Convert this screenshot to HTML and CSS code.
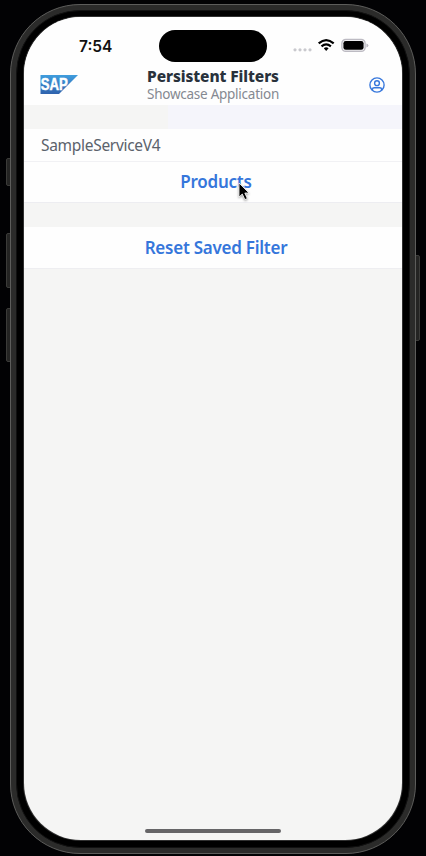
FILE: index.html
```html
<!DOCTYPE html>
<html lang="en">
<head>
<meta charset="utf-8">
<title>Persistent Filters</title>
<link rel="stylesheet" href="styles.css">
</head>
<body>
<div class="stage">
  <i class="key key-action"></i>
  <i class="key key-up"></i>
  <i class="key key-down"></i>
  <i class="key key-power"></i>
  <div class="phone">
    <div class="bezel">
      <main class="screen">
        <div class="status">
          <span class="time">7:54</span>
          <span class="island"></span>
          <svg class="indicators" width="78" height="16" viewBox="0 0 78 16">
            <g fill="#c9c9ce"><circle cx="3" cy="11.8" r="1.6"/><circle cx="8" cy="11.8" r="1.6"/><circle cx="13" cy="11.8" r="1.6"/><circle cx="18" cy="11.8" r="1.6"/></g>
            <g fill="none" stroke="#000" stroke-width="2.2"><path d="M26.7 5.4Q34.2-1 41.7 5.4"/><path d="M29.5 8.4Q34.2 4.4 38.9 8.4"/></g>
            <path d="M31.8 10.3Q34.2 8.4 36.6 10.3L34.2 13Z"/>
            <rect x="49.9" y="1.5" width="23.2" height="11.8" rx="3.8" fill="#fff" stroke="#bdbbc3" stroke-width="1.4"/>
            <rect x="51.4" y="3" width="20.2" height="8.8" rx="2.3"/>
            <path d="M74.4 5.4Q76.4 6 76.4 7.4T74.4 9.4Z" fill="#bdbbc3"/>
          </svg>
        </div>
        <header class="bar">
          <svg class="logo" width="38" height="20" viewBox="0 0 38 20">
            <defs><linearGradient id="sap" x2="0" y2="1"><stop stop-color="#3f9ddd"/><stop offset="1" stop-color="#2f62ad"/></linearGradient></defs>
            <path d="M0.5 0H38L19 19H0.5Z" fill="url(#sap)"/>
            <text x="0.8" y="15.2" textLength="27" lengthAdjust="spacingAndGlyphs">SAP</text>
          </svg>
          <div class="heading">
            <h1>Persistent Filters</h1>
            <p>Showcase Application</p>
          </div>
          <svg class="user" width="16" height="16" viewBox="0 0 16 16" fill="none" stroke="#3878dc" stroke-width="1.4">
            <circle cx="8" cy="8" r="7.1"/><circle cx="8" cy="6.2" r="2.4"/><path d="M3.4 13.2V12.4Q3.4 10.7 5.2 10.7H10.8Q12.6 10.7 12.6 12.4V13.2"/>
          </svg>
        </header>
        <div class="gap gap-top"></div>
        <div class="service"><span>SampleServiceV4</span></div>
        <div class="row products"><span>Products</span>
          <svg class="pointer" width="12" height="19" viewBox="0 0 12 19"><path d="M1 1V15L4.3 12L6.9 17.6L9.3 16.5L6.8 11H11Z" stroke="#fff" stroke-width=".8"/></svg>
        </div>
        <div class="gap gap-mid"></div>
        <div class="row reset"><span>Reset Saved Filter</span></div>
        <div class="home"></div>
      </main>
    </div>
  </div>
</div>
</body>
</html>
```
FILE: styles.css
```css
* { box-sizing: border-box; }
body { margin: 0; background: #020204; font-family: "Noto Sans", sans-serif; }
.stage { position: relative; width: 426px; height: 856px; padding: 4px 0 0 10px; overflow: hidden; }
.key { position: absolute; width: 6px; background: #242423; border: 1px solid #3b3b39; border-radius: 2px 0 0 2px; left: 6px; }
.key-action { top: 158px; height: 28px; }
.key-up { top: 233px; height: 55px; }
.key-down { top: 308px; height: 54px; }
.key-power { left: 415px; top: 255px; height: 86px; width: 5px; border-radius: 0 2px 2px 0; }
.phone { position: relative; width: 406px; height: 850px; padding: 5px; border: 1px solid #5d5d5b; border-radius: 70px; background: #2b2b2a; }
.bezel { height: 838px; padding: 7px; border: 1px solid #111; border-radius: 64px; background: #000; }
.screen { display: flex; flex-direction: column; width: 378px; height: 823px; margin: -1px 0 0; border-radius: 57px; background: #f5f5f4; overflow: hidden; box-shadow: 0 0 0 1px #303030; }
.status { display: flex; align-items: flex-start; height: 49px; padding: 12.5px 0 0 55px; background: #fefefe; }
.time { width: 80px; height: 32px; font: 600 15.5px/33px Inter, sans-serif; color: #111; }
.island { width: 108px; height: 32px; border-radius: 16px; background: #000; }
.indicators { margin: 8px 0 0 24.5px; }
.bar { display: flex; height: 39px; background: #fefefe; padding-left: 16px; }
.logo { margin-top: 9px; }
.logo text { font: 700 16px "Liberation Sans", sans-serif; fill: #fff; stroke: #fff; stroke-width: .5px; }
.heading { width: 180px; margin-left: 45px; text-align: center; white-space: nowrap; }
.heading h1 { margin: 2px 0 0; font: 800 15.5px/17px "Noto Sans", sans-serif; letter-spacing: -.1px; color: #29323c; }
.heading p { margin: 0; padding-top: 1px; font-size: 13.5px; line-height: 17px; letter-spacing: -.25px; color: #858991; }
.user { margin: 11px 0 0 66px; }
.gap { background: #f5f5f4; }
.gap-top { height: 24px; background: linear-gradient(90deg, #f5f5f4 144px, #f5f5fb 144px); }
.service { height: 33px; padding-left: 17px; background: #fefefe; border-bottom: 1px solid #f1f1f4; font-size: 15.5px; line-height: 33px; letter-spacing: -.3px; color: #5b626b; }
.row { position: relative; display: flex; justify-content: center; background: #fefefe; color: #3576db; font-size: 17px; font-weight: 600; letter-spacing: -.25px; padding-left: 6px; }
.products { height: 41px; line-height: 39px; border-bottom: 1px solid #ededf1; }
.gap-mid { height: 24px; }
.reset { height: 42px; line-height: 41px; border-bottom: 1px solid #eeeef1; }
.pointer { position: absolute; left: 214px; top: 20px; filter: drop-shadow(0 1px 1px #0006); }
.home { width: 136px; height: 4px; margin: auto auto 7px 121px; border-radius: 2px; background: #666567; }
```
